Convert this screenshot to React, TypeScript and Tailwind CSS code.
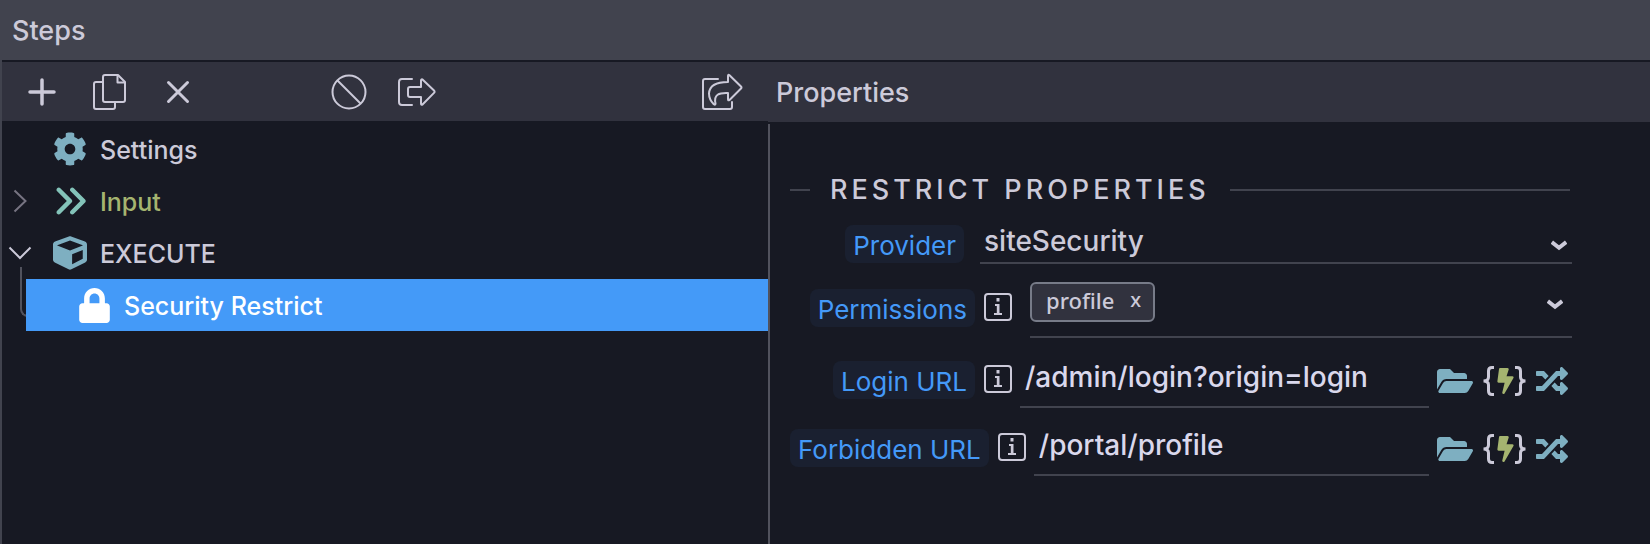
import { useState } from "react";
import type { ReactNode } from "react";
import { FaBolt, FaCog, FaCube, FaFolderOpen, FaLock, FaRandom } from "react-icons/fa";
import { FaAnglesRight } from "react-icons/fa6";

function PlusIcon() {
  return (
    <svg width="28" height="28" viewBox="0 0 28 28" fill="none" stroke="currentColor" strokeWidth="3.500" strokeLinecap="round">
      <path d="M14 2v24M2 14h24" />
    </svg>
  );
}

function CopyIcon() {
  return (
    <svg width="34" height="36" viewBox="0 0 34 36" fill="none" stroke="currentColor" strokeWidth="2" strokeLinejoin="round">
      <path d="M12 1h13l7 7v18a2 2 0 0 1-2 2H12a2 2 0 0 1-2-2V3a2 2 0 0 1 2-2z" />
      <path d="M24.500 1v7.500H32" />
      <path d="M10 8H3a2 2 0 0 0-2 2v23a2 2 0 0 0 2 2h17a2 2 0 0 0 2-2v-5" />
    </svg>
  );
}

function CrossIcon() {
  return (
    <svg width="24" height="24" viewBox="0 0 24 24" fill="none" stroke="currentColor" strokeWidth="3" strokeLinecap="round">
      <path d="M2.500 2.500l19 19M21.500 2.500l-19 19" />
    </svg>
  );
}

function BanIcon() {
  return (
    <svg width="36" height="36" viewBox="0 0 36 36" fill="none" stroke="currentColor" strokeWidth="2">
      <circle cx="18" cy="18" r="16.500" />
      <path d="M6.500 6.500l23 23" />
    </svg>
  );
}

function ExitIcon() {
  return (
    <svg width="38" height="28" viewBox="0 0 38 28" fill="none" stroke="currentColor" strokeWidth="2" strokeLinecap="round" strokeLinejoin="round">
      <path d="M14 1H4a3 3 0 0 0-3 3v20a3 3 0 0 0 3 3h10" />
      <path d="M12 9h11V2.500q0-1.500 1.500-1L36 12.500q1.200 1.200 0 2.400L24.500 26.500q-1.500.8-1.500-1V19H12q-2 0-2-2v-6q0-2 2-2z" />
    </svg>
  );
}

function ShareIcon() {
  return (
    <svg width="42" height="38" viewBox="0 0 42 38" fill="none" stroke="currentColor" strokeWidth="2" strokeLinecap="round" strokeLinejoin="round">
      <path d="M17 6H4a2 2 0 0 0-2 2v26a2 2 0 0 0 2 2h25a2 2 0 0 0 2-2v-5" />
      <path d="M27 9V3q0-2 1.500-.8L40 13.500q1 1 0 2L28.500 27q-1.500 1-1.500-.8V20c-9-.4-14.500 1.500-12.500 10.500q0 2-1.700.8C9 27.500 8 24 8 20.500 8.500 12.500 15 9 27 9z" />
    </svg>
  );
}

function SelectArrow() {
  return (
    <svg width="16" height="11" viewBox="0 0 16 11" fill="none" stroke="currentColor" strokeWidth="4">
      <path d="M.8 2.200L8 7.800l7.200-5.600" />
    </svg>
  );
}

function ToolButton({ label, children }: { label: string; children: ReactNode }) {
  return (
    <button type="button" aria-label={label} className="w-[68px] h-full flex items-center justify-center">
      {children}
    </button>
  );
}

function InfoButton({ label }: { label: string }) {
  return (
    <button
      type="button"
      aria-label={label}
      className="size-7 shrink-0 flex items-center justify-center border-2 border-[#cccad9] rounded"
    >
      <svg width="8" height="18" viewBox="0 0 8 18" fill="currentColor">
        <path d="M2.500 0h3v3.500h-3zM1 6h4.500v9H8v2H0v-2h2.800V8H1z" />
      </svg>
    </button>
  );
}

function FieldLabel({ htmlFor, children }: { htmlFor: string; children: string }) {
  return (
    <label
      htmlFor={htmlFor}
      className="h-[38px] px-2 pt-[3px] flex items-center rounded-lg bg-[#1a2030] text-[#4499f8] text-[26px] font-normal whitespace-nowrap"
    >
      {children}
    </label>
  );
}

function UrlField({ id, label, initial }: { id: string; label: string; initial: string }) {
  const [value, setValue] = useState(initial);

  return (
    <div className="flex items-stretch">
      <div className="min-w-[185px] flex justify-end items-center pt-1">
        <FieldLabel htmlFor={id}>{label}</FieldLabel>
      </div>
      <div className="ml-[9px] mr-2 flex items-center pt-0.5">
        <InfoButton label={`About ${label}`} />
      </div>
      <input
        id={id}
        value={value}
        onChange={(e) => setValue(e.target.value)}
        className="flex-1 min-w-0 h-[60px] px-[5px] bg-transparent border-b-2 border-[#41434e] text-[28px] text-[#dad8ec] outline-none"
      />
      <div className="w-[143px] pl-2 pr-1 pt-1.5 flex items-center justify-between">
        <button type="button" aria-label="Browse" className="text-[#7eafc1]">
          <FaFolderOpen size={36} />
        </button>
        <button type="button" aria-label="Data binding" className="flex items-center">
          <svg width="11" height="30" viewBox="0 0 11 30" fill="none" stroke="currentColor" strokeWidth="3">
            <path d="M11 1.500H9q-3.500 0-3.500 3.500v6q0 4-5 4 5 0 5 4v6q0 3.500 3.500 3.500h2" />
          </svg>
          <FaBolt className="w-[21px] h-[26px] pl-0.5 text-[#a5b470]" />
          <svg width="11" height="30" viewBox="0 0 11 30" fill="none" stroke="currentColor" strokeWidth="3">
            <path d="M0 1.500h2q3.500 0 3.500 3.500v6q0 4 5 4-5 0-5 4v6q0 3.500-3.500 3.500H0" />
          </svg>
        </button>
        <button type="button" aria-label="Make dynamic" className="text-[#7eafc1]">
          <FaRandom size={32} />
        </button>
      </div>
    </div>
  );
}

function StepsTree() {
  return (
    <ul className="pt-0.5 text-[25px]">
      <li className="h-[52px] flex items-center gap-3">
        <span className="w-[86px] pl-[50px] flex justify-center text-[#7eafc1]">
          <FaCog size={34} />
        </span>
        <span className="pt-[3px]">Settings</span>
      </li>
      <li className="h-[52px] flex items-center gap-3 text-[#a5b470]">
        <span className="w-[86px] flex items-center">
          <button type="button" aria-label="Expand Input" className="w-9 flex justify-center text-[#777482]">
            <svg width="14" height="24" viewBox="0 0 14 24" fill="none" stroke="currentColor" strokeWidth="2">
              <path d="M1.500 1.500L12.500 12 1.500 22.500" />
            </svg>
          </button>
          <span className="ml-3.5 w-9 flex justify-center text-[#83c3b9]">
            <FaAnglesRight size={38} />
          </span>
        </span>
        <span className="pt-[3px]">Input</span>
      </li>
      <li>
        <div className="h-[52px] flex items-center gap-3">
          <span className="w-[86px] flex items-center">
            <button type="button" aria-label="Collapse EXECUTE" className="w-9 flex justify-center">
              <svg width="24" height="14" viewBox="0 0 24 14" fill="none" stroke="currentColor" strokeWidth="2">
                <path d="M1.500 1.500L12 12 22.500 1.500" />
              </svg>
            </button>
            <span className="ml-3.5 w-9 flex justify-center text-[#7eafc1]">
              <FaCube size={34} />
            </span>
          </span>
          <span className="pt-[3px]">EXECUTE</span>
        </div>
        <ul className="relative pl-6">
          <li className="absolute left-[18px] -top-3 w-4 h-[50px] border-l-2 border-b-2 border-[#51525d] rounded-bl-lg" aria-hidden="true" />
          <li className="relative h-[52px] pl-[50px] flex items-center gap-3 bg-[#449af8] text-white">
            <span className="w-9 flex justify-center">
              <FaLock size={35} />
            </span>
            <span className="pt-[3px]">Security Restrict</span>
          </li>
        </ul>
      </li>
    </ul>
  );
}

export default function App() {
  const [tags, setTags] = useState(["profile"]);

  return (
    <div className="min-h-screen flex flex-col bg-[#171923] text-[#cccad9] font-medium font-['Inter',sans-serif]">
      <header className="h-[60px] pl-3 pt-[3px] flex items-center bg-[#41434e]">
        <h1 className="text-[27px]">Steps</h1>
      </header>

      <main className="flex-1 pt-0.5 grid grid-cols-[766fr_882fr] border-l-2 border-[#41434e]">
        <section className="min-w-0">
          <div className="h-[59px] pl-1.5 pr-3 flex items-center bg-[#31323e]">
            <ToolButton label="Add step"><PlusIcon /></ToolButton>
            <ToolButton label="Duplicate"><CopyIcon /></ToolButton>
            <ToolButton label="Delete"><CrossIcon /></ToolButton>
            <div className="w-[103px]" />
            <ToolButton label="Disable"><BanIcon /></ToolButton>
            <ToolButton label="Exit"><ExitIcon /></ToolButton>
            <div className="flex-1" />
            <ToolButton label="Share"><ShareIcon /></ToolButton>
          </div>
          <StepsTree />
        </section>

        <section className="min-w-0 flex flex-col">
          <div className="h-[60px] pl-2 pt-0.5 flex items-center bg-[#31323e]">
            <h2 className="text-[27px]">Properties</h2>
          </div>

          <form className="flex-1 mt-0.5 pl-5 pr-[78px] pt-[46px] border-l-2 border-[#51525d]">
            <div className="h-10 mb-2.5 pr-0.5 flex items-center">
              <span className="w-5 h-0.5 bg-[#41434e]" />
              <h3 className="px-5 text-[27px] tracking-[4px] whitespace-nowrap">RESTRICT PROPERTIES</h3>
              <span className="flex-1 h-0.5 bg-[#41434e]" />
            </div>

            <div className="flex flex-col gap-2">
              <div className="flex items-start pb-2.5">
                <div className="w-[174px] mr-4 pt-[5px] flex justify-end">
                  <FieldLabel htmlFor="provider">Provider</FieldLabel>
                </div>
                <div className="relative flex-1">
                  <select
                    id="provider"
                    className="w-full h-11 px-1 appearance-none bg-transparent border-b-2 border-[#41434e] text-[28px] outline-none"
                  >
                    <option>siteSecurity</option>
                  </select>
                  <span className="absolute right-[5px] top-5 pointer-events-none">
                    <SelectArrow />
                  </span>
                </div>
              </div>

              <div className="flex items-start pb-0.5">
                <div className="w-[185px] pt-[7px] flex justify-end">
                  <FieldLabel htmlFor="permissions">Permissions</FieldLabel>
                </div>
                <div className="ml-[9px] mr-[18px] pt-[11px]">
                  <InfoButton label="About Permissions" />
                </div>
                <div className="flex-1 h-14 pr-[9px] flex items-start border-b-2 border-[#41434e]">
                  {tags.map((tag) => (
                    <span
                      key={tag}
                      className="h-10 pl-3.5 pr-3 pb-1 flex items-center gap-4 bg-[#31323e] border-2 border-[#777b88] rounded-md text-[22px] font-['Noto_Sans',sans-serif]"
                    >
                      {tag}
                      <button
                        type="button"
                        aria-label={`Remove ${tag}`}
                        onClick={() => setTags(tags.filter((t) => t !== tag))}
                        className="text-[20px]"
                      >
                        x
                      </button>
                    </span>
                  ))}
                  <button id="permissions" type="button" aria-label="Choose permissions" className="flex-1 pt-[17px] flex justify-end">
                    <SelectArrow />
                  </button>
                </div>
              </div>

              <UrlField id="login-url" label="Login URL" initial="/admin/login?origin=login" />
              <UrlField id="forbidden-url" label="Forbidden URL" initial="/portal/profile" />
            </div>
          </form>
        </section>
      </main>
    </div>
  );
}
